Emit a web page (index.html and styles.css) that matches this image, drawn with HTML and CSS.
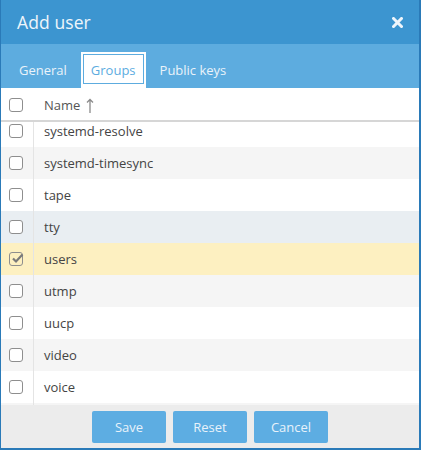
FILE: index.html
```html
<!DOCTYPE html>
<html>
<head>
<meta charset="utf-8">
<link rel="stylesheet" href="styles.css">
</head>
<body>
<div class="dialog">
  <div class="header">
    <span class="title">Add user</span>
    <svg class="close" width="11" height="11" viewBox="0 0 11 11"><path d="M1.5 1.5 L9.5 9.5 M9.5 1.5 L1.5 9.5" stroke="#eef5fb" stroke-width="3" stroke-linecap="square"/></svg>
  </div>
  <div class="tabs">
    <div class="tab"><span class="tab-inner">General</span></div>
    <div class="tab active"><span class="tab-inner">Groups</span></div>
    <div class="tab"><span class="tab-inner">Public keys</span></div>
  </div>
  <div class="table">
    <div class="thead">
      <div class="cb-cell head"><span class="cb"></span></div>
      <div class="name-cell head-name">Name
        <svg class="sort" width="8" height="16" viewBox="0 0 8 16"><path d="M4 1.5 V15 M1 4.5 L4 1.5 L7 4.5" stroke="#8a8a8a" stroke-width="1.3" fill="none"/></svg>
      </div>
    </div>
    <div class="tbody">
      <div class="row first"><div class="cb-cell"><span class="cb"></span></div><div class="name-cell">systemd-resolve</div></div>
      <div class="row alt"><div class="cb-cell"><span class="cb"></span></div><div class="name-cell">systemd-timesync</div></div>
      <div class="row"><div class="cb-cell"><span class="cb"></span></div><div class="name-cell">tape</div></div>
      <div class="row hover"><div class="cb-cell"><span class="cb"></span></div><div class="name-cell">tty</div></div>
      <div class="row selected"><div class="cb-cell"><span class="cb checked"><svg width="14" height="14" viewBox="0 0 14 14"><path d="M3 6.5 L6 9.5 L12.5 2.5" stroke="#7a7a7a" stroke-width="2.2" fill="none"/></svg></span></div><div class="name-cell">users</div></div>
      <div class="row alt"><div class="cb-cell"><span class="cb"></span></div><div class="name-cell">utmp</div></div>
      <div class="row"><div class="cb-cell"><span class="cb"></span></div><div class="name-cell">uucp</div></div>
      <div class="row alt"><div class="cb-cell"><span class="cb"></span></div><div class="name-cell">video</div></div>
      <div class="row"><div class="cb-cell"><span class="cb"></span></div><div class="name-cell">voice</div></div>
      <div class="row alt"><div class="cb-cell"></div><div class="name-cell"></div></div>
    </div>
  </div>
  <div class="footer">
    <button class="btn">Save</button>
    <button class="btn">Reset</button>
    <button class="btn">Cancel</button>
  </div>
</div>
</body>
</html>
```
FILE: styles.css
```css
* { box-sizing: border-box; }
html, body { margin: 0; padding: 0; }
body {
  font-family: "Open Sans", "Liberation Sans", sans-serif;
  width: 421px;
  height: 450px;
  overflow: hidden;
}
.dialog {
  width: 421px;
  height: 450px;
  border-style: solid;
  border-color: #2a7ab8;
  border-width: 0 2px 2px 1px;
  display: flex;
  flex-direction: column;
  background: #fff;
}
.header {
  height: 44px;
  flex: none;
  background: #3c95d0;
  display: flex;
  align-items: center;
  justify-content: space-between;
  padding: 0 16px 0 16px;
}
.title {
  color: #eef5fb;
  font-size: 17.5px;
  letter-spacing: 0.1px;
}
.close { display: block; margin-top: 1px; }
.tabs {
  height: 44px;
  flex: none;
  background: #5dacdf;
  display: flex;
  align-items: flex-end;
  padding-left: 8px;
  gap: 4px;
}
.tab {
  height: 36px;
  padding: 2px 2px 4px 2px;
  display: flex;
}
.tab-inner {
  border: 1px solid transparent;
  padding: 0 7px;
  display: flex;
  align-items: center;
  color: #eaf3fa;
  font-size: 13px;
  padding-top: 1px;
}
.tab.active { background: #fff; }
.tab.active .tab-inner { border-color: #5dacdf; color: #5dacdf; }
.table {
  flex: 1;
  display: flex;
  flex-direction: column;
  min-height: 0;
}
.thead {
  height: 34px;
  flex: none;
  display: flex;
  padding-top: 2px;
  border-bottom: 2px solid #d6d6d6;
}
.tbody {
  flex: 1;
  overflow: hidden;
  min-height: 0;
}
.row {
  height: 32px;
  display: flex;
  background: #fff;
}
.row.first { margin-top: -7px; }
.row.alt { background: #f5f5f5; }
.row.hover { background: #e9eef2; }
.row.selected { background: #fdf0c1; }
.cb-cell {
  width: 33px;
  flex: none;
  display: flex;
  align-items: center;
  padding-left: 8px;
  border-right: 1px solid #e4e4e4;
}
.cb-cell.head { border-right-color: transparent; }
.cb {
  width: 14px;
  height: 14px;
  border: 1px solid #8e8e8e;
  border-radius: 3px;
  background: #fff;
  position: relative;
}
.cb.checked { background: transparent; }
.cb.checked svg { position: absolute; left: 0; top: -1px; }
.name-cell {
  display: flex;
  align-items: center;
  padding-left: 10px;
  font-size: 13px;
  color: #444;
}
.head-name { color: #555; }
.sort { margin-left: 6px; margin-top: 1px; }
.footer {
  height: 43px;
  flex: none;
  background: #ececec;
  display: flex;
  justify-content: center;
  align-items: flex-start;
  padding-top: 6px;
  gap: 7px;
}
.btn {
  width: 74px;
  height: 32px;
  border: none;
  border-radius: 2px;
  background: #5dade2;
  color: #e8f2fa;
  font-family: "Open Sans", "Liberation Sans", sans-serif;
  font-size: 13px;
  padding: 0;
}
```
